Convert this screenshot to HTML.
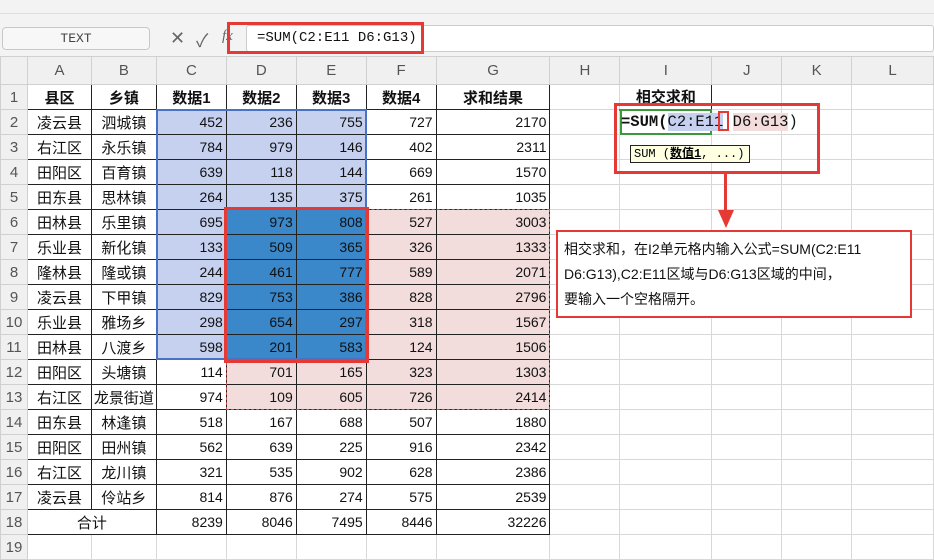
<!DOCTYPE html>
<html><head><meta charset="utf-8"><style>
*{box-sizing:border-box;margin:0;padding:0}
body{width:934px;height:560px;overflow:hidden;background:#fff;font-family:"Liberation Sans","Noto Sans CJK SC",sans-serif;position:relative}
.abs{position:absolute}
table{position:absolute;left:0;top:56px;border-collapse:collapse;table-layout:fixed}
td{height:25px;border:1px solid #d8d8d8;font-size:14px;text-align:right;padding-right:3px;white-space:nowrap;overflow:hidden;color:#111}
tr.h td{height:28px;background:#f0f0f0;color:#555;text-align:center;padding:0;font-size:15px;border-color:#d0d0d0}
td.r{background:#f0f0f0;color:#555;text-align:center;padding:0;font-size:15px;border-color:#d0d0d0}
td.k{border:1px solid #222}
td.c{text-align:center;font-size:15px;padding:0}
td.bh{font-weight:bold;text-align:center;padding:0;font-size:15px}
td.b{background:#c6d0ef}
td.d{background:#3a87c9}
td.p{background:#f2dcdc}
</style></head><body>
<div class="abs" style="left:0;top:0;width:934px;height:14px;background:#f3f3f3;border-bottom:1px solid #e0e0e0"></div>
<div class="abs" style="left:0;top:14px;width:934px;height:42px;background:#f3f3f3"></div>
<div class="abs" style="left:2px;top:27px;width:148px;height:23px;background:#f7f7f7;border:1px solid #c8c8c8;border-radius:4px;font-family:'Liberation Mono',monospace;font-size:13px;color:#444;text-align:center;line-height:21px">TEXT</div>
<div class="abs" style="left:170px;top:28px;font-size:18px;color:#666">✕</div>
<div class="abs" style="left:196px;top:27px;font-size:18px;color:#666">✓</div>
<div class="abs" style="left:222px;top:28px;font-size:15px;color:#666;font-style:italic;font-family:'Liberation Serif',serif">fx</div>
<div class="abs" style="left:246px;top:25px;width:688px;height:27px;background:#fff;border:1px solid #ccc;border-radius:3px"></div>
<div class="abs" style="left:257px;top:30px;font-family:'Liberation Mono',monospace;font-size:14px;color:#111">=SUM(C2:E11 D6:G13)</div>
<div class="abs" style="left:227px;top:22px;width:197px;height:32px;border:3px solid #e53935"></div>

<table>
<colgroup><col style="width:27px"><col style="width:64px"><col style="width:65px"><col style="width:70px"><col style="width:70px"><col style="width:70px"><col style="width:70px"><col style="width:114px"><col style="width:70px"><col style="width:92px"><col style="width:70px"><col style="width:70px"><col style="width:82px"></colgroup>
<tr class="h"><td></td><td>A</td><td>B</td><td>C</td><td>D</td><td>E</td><td>F</td><td>G</td><td>H</td><td>I</td><td>J</td><td>K</td><td>L</td></tr>
<tr><td class="r">1</td><td class="k bh">县区</td><td class="k bh">乡镇</td><td class="k bh">数据1</td><td class="k bh">数据2</td><td class="k bh">数据3</td><td class="k bh">数据4</td><td class="k bh">求和结果</td><td></td><td class="k bh" style="border-bottom:2px solid #3a9a3a">相交求和</td><td></td><td></td><td></td></tr>
<tr><td class="r">2</td><td class="k c">凌云县</td><td class="k c">泗城镇</td><td class="k b">452</td><td class="k b">236</td><td class="k b">755</td><td class="k">727</td><td class="k">2170</td><td></td><td></td><td></td><td></td><td></td></tr>
<tr><td class="r">3</td><td class="k c">右江区</td><td class="k c">永乐镇</td><td class="k b">784</td><td class="k b">979</td><td class="k b">146</td><td class="k">402</td><td class="k">2311</td><td></td><td></td><td></td><td></td><td></td></tr>
<tr><td class="r">4</td><td class="k c">田阳区</td><td class="k c">百育镇</td><td class="k b">639</td><td class="k b">118</td><td class="k b">144</td><td class="k">669</td><td class="k">1570</td><td></td><td></td><td></td><td></td><td></td></tr>
<tr><td class="r">5</td><td class="k c">田东县</td><td class="k c">思林镇</td><td class="k b">264</td><td class="k b">135</td><td class="k b">375</td><td class="k">261</td><td class="k">1035</td><td></td><td></td><td></td><td></td><td></td></tr>
<tr><td class="r">6</td><td class="k c">田林县</td><td class="k c">乐里镇</td><td class="k b">695</td><td class="k d">973</td><td class="k d">808</td><td class="k p">527</td><td class="k p">3003</td><td></td><td></td><td></td><td></td><td></td></tr>
<tr><td class="r">7</td><td class="k c">乐业县</td><td class="k c">新化镇</td><td class="k b">133</td><td class="k d">509</td><td class="k d">365</td><td class="k p">326</td><td class="k p">1333</td><td></td><td></td><td></td><td></td><td></td></tr>
<tr><td class="r">8</td><td class="k c">隆林县</td><td class="k c">隆或镇</td><td class="k b">244</td><td class="k d">461</td><td class="k d">777</td><td class="k p">589</td><td class="k p">2071</td><td></td><td></td><td></td><td></td><td></td></tr>
<tr><td class="r">9</td><td class="k c">凌云县</td><td class="k c">下甲镇</td><td class="k b">829</td><td class="k d">753</td><td class="k d">386</td><td class="k p">828</td><td class="k p">2796</td><td></td><td></td><td></td><td></td><td></td></tr>
<tr><td class="r">10</td><td class="k c">乐业县</td><td class="k c">雅场乡</td><td class="k b">298</td><td class="k d">654</td><td class="k d">297</td><td class="k p">318</td><td class="k p">1567</td><td></td><td></td><td></td><td></td><td></td></tr>
<tr><td class="r">11</td><td class="k c">田林县</td><td class="k c">八渡乡</td><td class="k b">598</td><td class="k d">201</td><td class="k d">583</td><td class="k p">124</td><td class="k p">1506</td><td></td><td></td><td></td><td></td><td></td></tr>
<tr><td class="r">12</td><td class="k c">田阳区</td><td class="k c">头塘镇</td><td class="k">114</td><td class="k p">701</td><td class="k p">165</td><td class="k p">323</td><td class="k p">1303</td><td></td><td></td><td></td><td></td><td></td></tr>
<tr><td class="r">13</td><td class="k c">右江区</td><td class="k c">龙景街道</td><td class="k">974</td><td class="k p">109</td><td class="k p">605</td><td class="k p">726</td><td class="k p">2414</td><td></td><td></td><td></td><td></td><td></td></tr>
<tr><td class="r">14</td><td class="k c">田东县</td><td class="k c">林逢镇</td><td class="k">518</td><td class="k">167</td><td class="k">688</td><td class="k">507</td><td class="k">1880</td><td></td><td></td><td></td><td></td><td></td></tr>
<tr><td class="r">15</td><td class="k c">田阳区</td><td class="k c">田州镇</td><td class="k">562</td><td class="k">639</td><td class="k">225</td><td class="k">916</td><td class="k">2342</td><td></td><td></td><td></td><td></td><td></td></tr>
<tr><td class="r">16</td><td class="k c">右江区</td><td class="k c">龙川镇</td><td class="k">321</td><td class="k">535</td><td class="k">902</td><td class="k">628</td><td class="k">2386</td><td></td><td></td><td></td><td></td><td></td></tr>
<tr><td class="r">17</td><td class="k c">凌云县</td><td class="k c">伶站乡</td><td class="k">814</td><td class="k">876</td><td class="k">274</td><td class="k">575</td><td class="k">2539</td><td></td><td></td><td></td><td></td><td></td></tr>
<tr><td class="r">18</td><td class="k c" colspan="2">合计</td><td class="k">8239</td><td class="k">8046</td><td class="k">7495</td><td class="k">8446</td><td class="k">32226</td><td></td><td></td><td></td><td></td><td></td></tr>
<tr><td class="r">19</td><td></td><td></td><td></td><td></td><td></td><td></td><td></td><td></td><td></td><td></td><td></td><td></td></tr>
</table>

<div class="abs" style="left:156px;top:109px;width:211px;height:251px;border:2px solid #4a72c4"></div>
<div class="abs" style="left:226px;top:209px;width:324px;height:201px;border:1px dashed #c0504d"></div>
<div class="abs" style="left:224px;top:207px;width:145px;height:156px;border:3px solid #e53935"></div>

<div class="abs" style="left:620px;top:109px;width:92px;height:26px;border:2px solid #3a9a3a;border-top:none"></div>
<div class="abs" style="left:621px;top:113px;font-family:'Liberation Mono',monospace;font-size:15.5px;color:#111;white-space:pre"><b>=SUM(</b><span style="background:#c6d0ef">C2:E11</span> <span style="background:#f2dcdc">D6:G13</span>)</div>
<div class="abs" style="left:630px;top:145px;width:120px;height:18px;background:#ffffe1;border:1px solid #222;font-size:12px;line-height:16px;padding-left:3px;font-family:'Liberation Mono','Noto Sans CJK SC',monospace">SUM (<b><u>数值1</u></b>, ...)</div>
<div class="abs" style="left:614px;top:103px;width:206px;height:71px;border:3px solid #e53935"></div>
<div class="abs" style="left:718px;top:111px;width:11px;height:20px;border:2px solid #e53935"></div>
<div class="abs" style="left:724px;top:174px;width:3px;height:40px;background:#e53935"></div>
<div class="abs" style="left:718px;top:210px;width:0;height:0;border-left:8px solid transparent;border-right:8px solid transparent;border-top:18px solid #e53935"></div>

<div class="abs" style="left:556px;top:230px;width:356px;height:88px;border:2px solid #e53935;background:#fff;padding:5px 0 0 6px;font-size:14px;line-height:25px;color:#111">相交求和，在I2单元格内输入公式=SUM(C2:E11<br>D6:G13),C2:E11区域与D6:G13区域的中间，<br>要输入一个空格隔开。</div>
</body></html>
